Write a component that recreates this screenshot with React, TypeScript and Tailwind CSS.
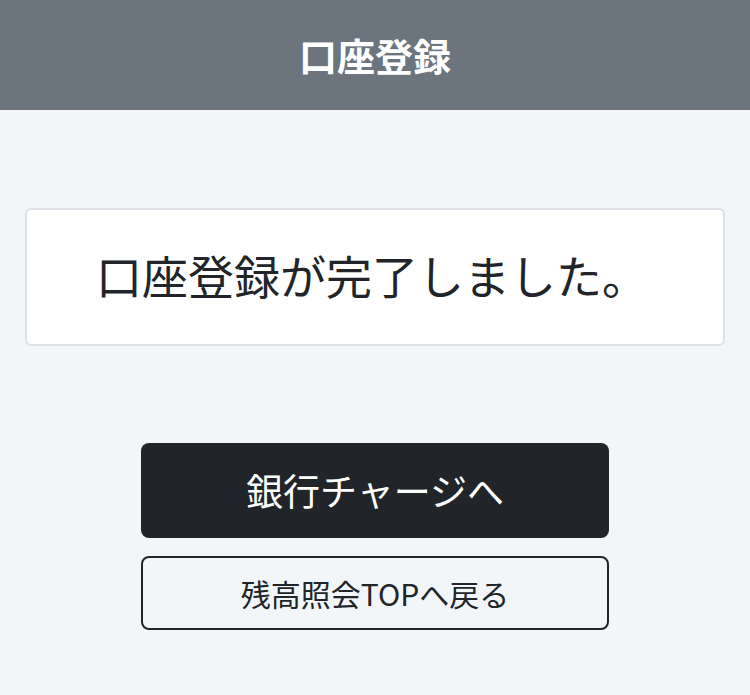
import React from "react";

const App = () => {
  return (
    <div
      className="min-h-[695px] bg-[#f3f6f9] text-[#212529]"
      style={{ fontFamily: '"Noto Sans CJK JP", "Noto Sans", sans-serif' }}
    >
      <header className="h-[110px] bg-[#6c757d] flex items-center justify-center">
        <h1 className="text-[38px] font-bold text-white leading-none">口座登録</h1>
      </header>

      <main className="px-[25px] pt-[98px]">
        <div className="h-[138px] bg-white border-2 border-[#dee2e6] rounded-[6px] flex items-center justify-center">
          <p className="text-[46px] leading-none mb-[6px] mr-[6px]">口座登録が完了しました。</p>
        </div>

        <div className="mt-[97px] flex flex-col items-center gap-[18px]">
          <button className="w-[468px] h-[95px] bg-[#212529] text-white rounded-[8px] text-[37px] leading-none">
            銀行チャージへ
          </button>
          <button className="w-[468px] h-[74px] border-2 border-[#212529] rounded-[8px] text-[30px] leading-none text-[#212529]">
            残高照会TOPへ戻る
          </button>
        </div>
      </main>
    </div>
  );
};

export default App;
